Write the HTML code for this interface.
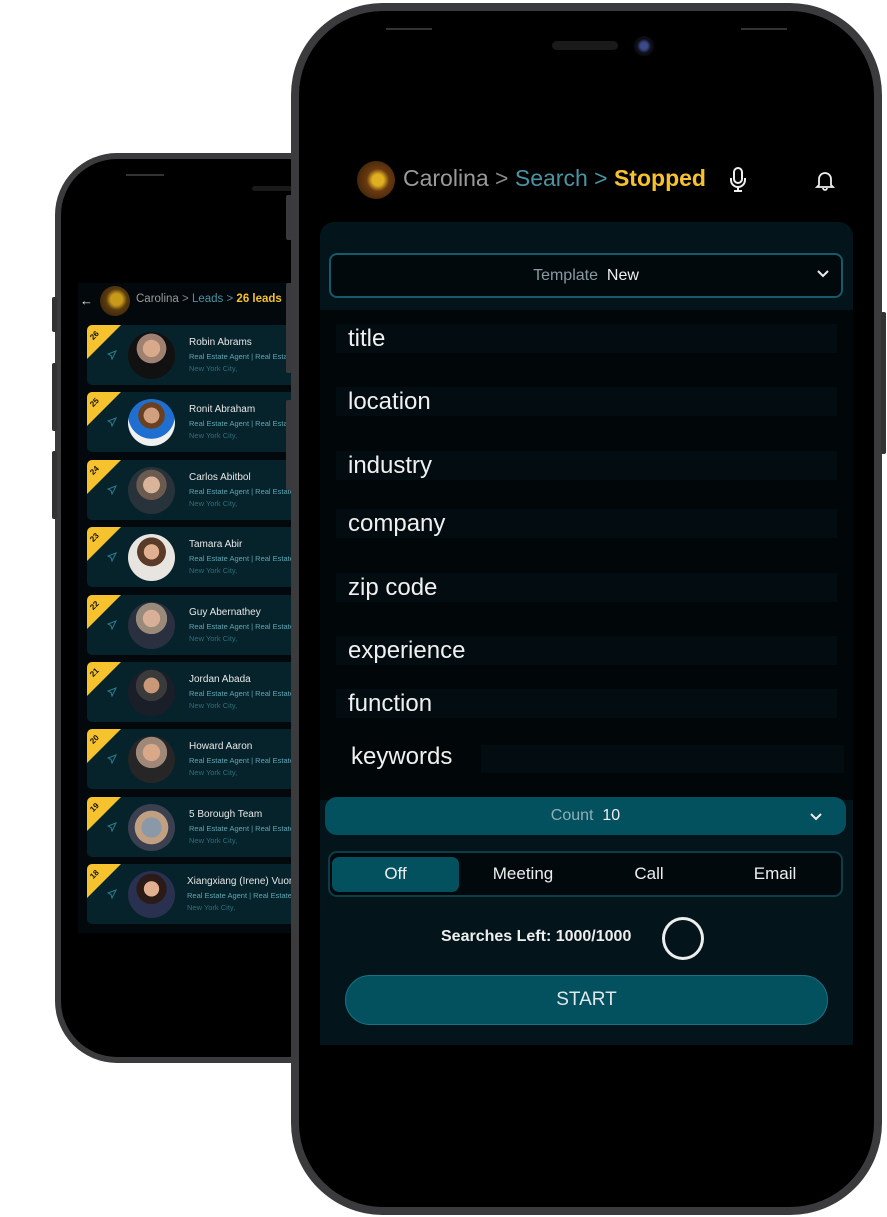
<!DOCTYPE html>
<html><head><meta charset="utf-8"><style>
*{margin:0;padding:0;box-sizing:border-box}
body{width:887px;height:1217px;background:#fff;position:relative;overflow:hidden;font-family:"Liberation Sans",sans-serif}
.a{position:absolute}
.card{position:absolute;left:87px;width:215px;height:60px;background:#06222a;border-radius:5px;overflow:hidden}
.tri{position:absolute;left:0;top:0;width:0;height:0;border-top:34px solid #f6c22d;border-right:34px solid transparent}
.num{position:absolute;left:3px;top:6px;font-size:8px;font-weight:bold;color:#111;transform:rotate(-45deg)}
.av{position:absolute;left:41px;top:7px;width:47px;height:47px;border-radius:50%;background:radial-gradient(circle at 50% 38%,#d9b49a 0 22%,#6b5a4e 23% 40%,#28323a 41%)}
.nm{position:absolute;left:102px;top:12px;font-size:10px;color:#e8e8e8;white-space:nowrap}
.jb{position:absolute;left:102px;top:27px;font-size:7.5px;color:#5fa7b5;white-space:nowrap}
.ct{position:absolute;left:102px;top:39px;font-size:7.5px;color:#2f6e7c;white-space:nowrap}
.pl{position:absolute;left:20px;top:25px;width:10px;height:10px}
.fld{position:absolute;left:336px;width:501px;height:29px;background:#020c11;color:#f0f0f0;font-size:24px;line-height:29px;padding-left:12px}
</style></head><body>

<!-- back phone -->
<div class="a" style="left:55px;top:153px;width:300px;height:910px;border-radius:62px;background:#3b3b3d"></div>
<div class="a" style="left:52px;top:297px;width:5px;height:35px;background:#333;border-radius:2px"></div>
<div class="a" style="left:52px;top:363px;width:5px;height:68px;background:#333;border-radius:2px"></div>
<div class="a" style="left:52px;top:451px;width:5px;height:68px;background:#333;border-radius:2px"></div>
<div class="a" style="left:61px;top:159px;width:290px;height:898px;border-radius:56px;background:#000"></div>
<div class="a" style="left:126px;top:174px;width:38px;height:2px;background:#333"></div>
<div class="a" style="left:252px;top:186px;width:40px;height:5px;border-radius:3px;background:#1a1a1a"></div>
<div class="a" style="left:78px;top:283px;width:215px;height:650px;background:#02080b"></div>
<div class="a" style="left:80px;top:293px;color:#eee;font-size:13px">←</div>
<div class="a" style="left:100px;top:286px;width:30px;height:30px;border-radius:50%;background:radial-gradient(circle at 55% 45%,#c89a1a 0 25%,#5a3a10 45%,#2a1a08)"></div>
<div class="a" style="left:136px;top:293px;font-size:11.5px;color:#9a9a9a;white-space:nowrap">Carolina <span style="color:#888">&gt;</span> <span style="color:#4b93a3">Leads</span> <span style="color:#4b93a3">&gt;</span> <b style="color:#f6c22d">26 leads</b></div>

<div class="card" style="top:325px"><div class="tri"></div><div class="num">26</div><svg class="pl" viewBox="0 0 10 10"><path d="M9 1L1 4l3 1.5L5 9z" fill="none" stroke="#2c7d90" stroke-width="1"/></svg><div class="av" style="background:radial-gradient(circle at 50% 35%,#d8a98a 0 22%,#a08070 23% 38%,#111 39%)"></div><div class="nm">Robin Abrams</div><div class="jb">Real Estate Agent | Real Estate</div><div class="ct">New York City,</div></div>
<div class="card" style="top:392px"><div class="tri"></div><div class="num">25</div><svg class="pl" viewBox="0 0 10 10"><path d="M9 1L1 4l3 1.5L5 9z" fill="none" stroke="#2c7d90" stroke-width="1"/></svg><div class="av" style="background:radial-gradient(circle at 50% 35%,#d0a080 0 20%,#6a4020 21% 34%,#1f6fd0 35% 60%,#f0f0f0 61%)"></div><div class="nm">Ronit Abraham</div><div class="jb">Real Estate Agent | Real Estate</div><div class="ct">New York City,</div></div>
<div class="card" style="top:460px"><div class="tri"></div><div class="num">24</div><svg class="pl" viewBox="0 0 10 10"><path d="M9 1L1 4l3 1.5L5 9z" fill="none" stroke="#2c7d90" stroke-width="1"/></svg><div class="av"></div><div class="nm">Carlos Abitbol</div><div class="jb">Real Estate Agent | Real Estate</div><div class="ct">New York City,</div></div>
<div class="card" style="top:527px"><div class="tri"></div><div class="num">23</div><svg class="pl" viewBox="0 0 10 10"><path d="M9 1L1 4l3 1.5L5 9z" fill="none" stroke="#2c7d90" stroke-width="1"/></svg><div class="av" style="background:radial-gradient(circle at 50% 38%,#e0b090 0 20%,#5a3a28 21% 38%,#e8e4e0 39%)"></div><div class="nm">Tamara Abir</div><div class="jb">Real Estate Agent | Real Estate</div><div class="ct">New York City,</div></div>
<div class="card" style="top:595px"><div class="tri"></div><div class="num">22</div><svg class="pl" viewBox="0 0 10 10"><path d="M9 1L1 4l3 1.5L5 9z" fill="none" stroke="#2c7d90" stroke-width="1"/></svg><div class="av" style="background:radial-gradient(circle at 50% 35%,#d8b098 0 22%,#9a8a7a 23% 40%,#2a3040 41%)"></div><div class="nm">Guy Abernathey</div><div class="jb">Real Estate Agent | Real Estate</div><div class="ct">New York City,</div></div>
<div class="card" style="top:662px"><div class="tri"></div><div class="num">21</div><svg class="pl" viewBox="0 0 10 10"><path d="M9 1L1 4l3 1.5L5 9z" fill="none" stroke="#2c7d90" stroke-width="1"/></svg><div class="av" style="background:radial-gradient(circle at 50% 35%,#c89878 0 20%,#3a3a3a 21% 40%,#1a1e28 41%)"></div><div class="nm">Jordan Abada</div><div class="jb">Real Estate Agent | Real Estate</div><div class="ct">New York City,</div></div>
<div class="card" style="top:729px"><div class="tri"></div><div class="num">20</div><svg class="pl" viewBox="0 0 10 10"><path d="M9 1L1 4l3 1.5L5 9z" fill="none" stroke="#2c7d90" stroke-width="1"/></svg><div class="av" style="background:radial-gradient(circle at 50% 35%,#d8a888 0 22%,#a08878 23% 40%,#262626 41%)"></div><div class="nm">Howard Aaron</div><div class="jb">Real Estate Agent | Real Estate</div><div class="ct">New York City,</div></div>
<div class="card" style="top:797px"><div class="tri"></div><div class="num">19</div><svg class="pl" viewBox="0 0 10 10"><path d="M9 1L1 4l3 1.5L5 9z" fill="none" stroke="#2c7d90" stroke-width="1"/></svg><div class="av" style="background:radial-gradient(circle at 50% 50%,#8a98a8 0 30%,#c0a080 31% 50%,#3a4050 51%)"></div><div class="nm">5 Borough Team</div><div class="jb">Real Estate Agent | Real Estate</div><div class="ct">New York City,</div></div>
<div class="card" style="top:864px"><div class="tri"></div><div class="num">18</div><svg class="pl" viewBox="0 0 10 10"><path d="M9 1L1 4l3 1.5L5 9z" fill="none" stroke="#2c7d90" stroke-width="1"/></svg><div class="av" style="background:radial-gradient(circle at 50% 38%,#e0b090 0 20%,#2a1a18 21% 40%,#2a3050 41%)"></div><div class="nm" style="left:100px">Xiangxiang (Irene) Vuong</div><div class="jb" style="left:100px">Real Estate Agent | Real Estate</div><div class="ct" style="left:100px">New York City,</div></div>

<!-- front phone -->
<div class="a" style="left:286px;top:195px;width:6px;height:45px;background:#3a3a3c;border-radius:2px"></div>
<div class="a" style="left:286px;top:283px;width:6px;height:90px;background:#3a3a3c;border-radius:2px"></div>
<div class="a" style="left:286px;top:400px;width:6px;height:90px;background:#3a3a3c;border-radius:2px"></div>
<div class="a" style="left:291px;top:3px;width:591px;height:1212px;border-radius:92px;background:#3b3b3d"></div>
<div class="a" style="left:881px;top:312px;width:5px;height:142px;background:#333;border-radius:2px"></div>
<div class="a" style="left:299px;top:11px;width:575px;height:1196px;border-radius:84px;background:#000"></div>
<div class="a" style="left:386px;top:28px;width:46px;height:2px;background:#333"></div>
<div class="a" style="left:741px;top:28px;width:46px;height:2px;background:#333"></div>
<div class="a" style="left:552px;top:41px;width:66px;height:9px;border-radius:5px;background:#1a1a1a"></div>
<div class="a" style="left:634px;top:36px;width:20px;height:20px;border-radius:50%;background:radial-gradient(circle,#3a4a8a 0 25%,#0e0e18 50%,#080808)"></div>

<div class="a" style="left:357px;top:161px;width:38px;height:38px;border-radius:50%;background:radial-gradient(circle at 55% 50%,#e0b020 0 20%,#6a3a10 40%,#2a1a08)"></div>
<div class="a" style="left:403px;top:165px;font-size:23px;color:#9a9a9a;white-space:nowrap">Carolina <span style="color:#888">&gt;</span> <span style="color:#4b93a3">Search</span> <span style="color:#4b93a3">&gt;</span> <b style="color:#f6c22d">Stopped</b></div>
<svg class="a" style="left:728px;top:166px" width="20" height="28" viewBox="0 0 20 28"><rect x="6" y="2" width="8" height="15" rx="4" fill="none" stroke="#eee" stroke-width="2"/><path d="M3 12v2a7 7 0 0 0 14 0v-2M10 21v4M6 25h8" fill="none" stroke="#eee" stroke-width="2"/></svg>
<svg class="a" style="left:815px;top:169px" width="20" height="22" viewBox="0 0 20 22"><path d="M4 16V10a6 6 0 0 1 12 0v6l2 2H2z M8 19a2 2 0 0 0 4 0" fill="none" stroke="#eee" stroke-width="1.8"/></svg>

<div class="a" style="left:320px;top:222px;width:533px;height:823px;background:#03141b;border-radius:14px 14px 0 0"></div>
<div class="a" style="left:320px;top:310px;width:533px;height:490px;background:#010608"></div>
<div class="a" style="left:329px;top:253px;width:514px;height:45px;border:2px solid #15596a;border-radius:8px;background:#02090d;text-align:center;line-height:41px;font-size:16px;color:#8a9a9e">Template&nbsp; <span style="color:#eee">New</span></div>
<svg class="a" style="left:817px;top:269px" width="12" height="9" viewBox="0 0 12 9"><path d="M1 2l5 5 5-5" fill="none" stroke="#eee" stroke-width="2"/></svg>

<div class="fld" style="top:324px">title</div>
<div class="fld" style="top:387px">location</div>
<div class="fld" style="top:451px">industry</div>
<div class="fld" style="top:509px">company</div>
<div class="fld" style="top:573px">zip code</div>
<div class="fld" style="top:636px">experience</div>
<div class="fld" style="top:689px">function</div>
<div class="a" style="left:351px;top:743px;font-size:24px;color:#f0f0f0">keywords</div>
<div class="a" style="left:481px;top:745px;width:363px;height:28px;background:#020c11"></div>

<div class="a" style="left:325px;top:797px;width:521px;height:38px;background:#03505f;border-radius:12px;text-align:center;line-height:38px;font-size:16px;color:#8fb0b6">Count&nbsp; <span style="color:#eee">10</span></div>
<svg class="a" style="left:810px;top:812px" width="12" height="9" viewBox="0 0 12 9"><path d="M1 2l5 5 5-5" fill="none" stroke="#eee" stroke-width="2"/></svg>

<div class="a" style="left:328px;top:851px;width:515px;height:46px;border:2px solid #0d3d48;border-radius:9px;background:#02090d"></div>
<div class="a" style="left:332px;top:857px;width:127px;height:35px;background:#03505f;border-radius:7px"></div>
<div class="a" style="left:332px;top:864px;width:127px;text-align:center;font-size:17px;color:#eee">Off</div>
<div class="a" style="left:460px;top:864px;width:126px;text-align:center;font-size:17px;color:#eee">Meeting</div>
<div class="a" style="left:586px;top:864px;width:126px;text-align:center;font-size:17px;color:#eee">Call</div>
<div class="a" style="left:712px;top:864px;width:126px;text-align:center;font-size:17px;color:#eee">Email</div>

<div class="a" style="left:441px;top:928px;font-size:16px;font-weight:bold;color:#eee">Searches Left: 1000/1000</div>
<div class="a" style="left:662px;top:917px;width:42px;height:43px;border:3px solid #eee;border-radius:50%"></div>

<div class="a" style="left:345px;top:975px;width:483px;height:50px;background:#03505f;border:1.5px solid #1a7384;border-radius:25px;text-align:center;line-height:47px;font-size:19px;color:#dfe8ea">START</div>
</body></html>
